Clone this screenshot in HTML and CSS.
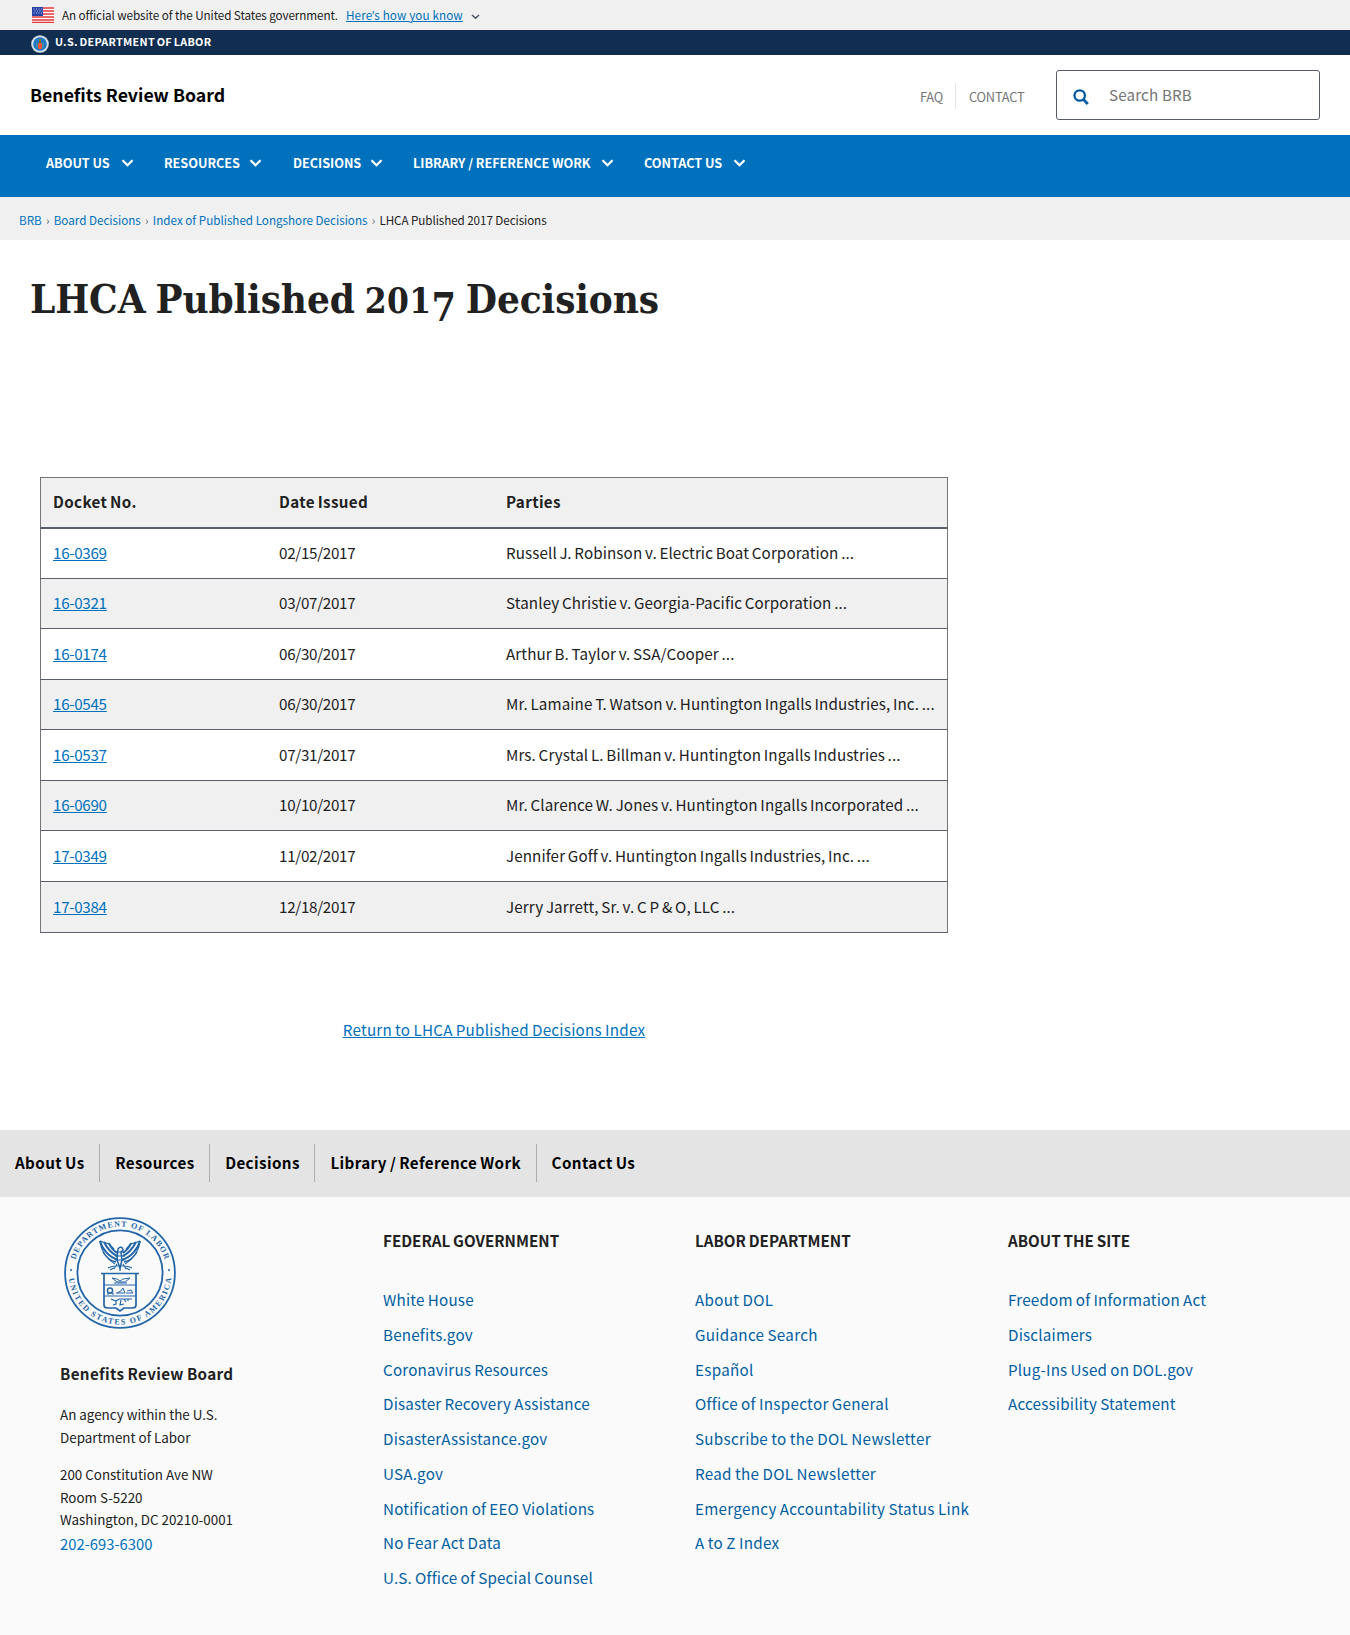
FILE: index.html
```html
<!DOCTYPE html>
<html lang="en">
<head>
<meta charset="utf-8">
<title>LHCA Published 2017 Decisions</title>
<link rel="stylesheet" href="styles.css">
</head>
<body>
<svg class="defs" width="0" height="0" aria-hidden="true">
  <symbol id="chev" viewBox="0 0 13 8"><path d="M1.5 1.2 6.5 6.2 11.5 1.2" fill="none" stroke="currentColor" stroke-width="2.3"/></symbol>
</svg>
<div class="gov">
  <svg class="flag" viewBox="0 0 22 16"><rect width="22" height="16" fill="#fff"/><path d="M0 1h22M0 4h22M0 7h22M0 10h22M0 13h22M0 15.5h22" stroke="#e0383b" stroke-width="1.5"/><rect width="11" height="9" fill="#2743a6"/><path d="M1.5 2h9M2.5 4h8M1.5 6h9" stroke="#b9c5ee" stroke-width="1" stroke-dasharray="1 1.5"/></svg>
  <span class="gov-text">An official website of the United States government.</span>
  <a class="gov-link">Here<span class="apos">’</span>s how you know</a>
  <svg class="gov-chev" viewBox="0 0 9 6"><path d="M1 1 4.5 4.3 8 1" fill="none" stroke="#4a5763" stroke-width="1.5"/></svg>
</div>
<div class="dol">
  <svg class="dol-seal" viewBox="0 0 18 18"><circle cx="9" cy="9" r="8.8" fill="#d5dde6"/><circle cx="9" cy="9" r="6.8" fill="#1c79c4"/><path d="M5 8h2v4H5zM11 8h2v4h-2z" fill="#3f8da0"/><path d="M8 4h2v4H8z" fill="#806a2c"/><path d="M7 8h4v6H7z" fill="#e8553c"/></svg>
  <span>U.S. DEPARTMENT OF LABOR</span>
</div>
<header class="head">
  <div class="site">Benefits Review Board</div>
  <div class="util"><a class="faq">FAQ</a><a class="contact">CONTACT</a></div>
  <div class="search">
    <svg class="mag" viewBox="0 0 16 16"><circle cx="6.7" cy="6.5" r="5.2" fill="none" stroke="#005a9e" stroke-width="2.3"/><path d="M10.5 10.5 14.8 15" stroke="#005a9e" stroke-width="2.8"/></svg>
    <span>Search BRB</span>
  </div>
</header>
<nav class="nav">
  <a class="n1">ABOUT US<svg><use href="#chev"/></svg></a>
  <a class="n2">RESOURCES<svg><use href="#chev"/></svg></a>
  <a class="n3">DECISIONS<svg><use href="#chev"/></svg></a>
  <a class="n4">LIBRARY / REFERENCE WORK<svg><use href="#chev"/></svg></a>
  <a class="n5">CONTACT US<svg><use href="#chev"/></svg></a>
</nav>
<div class="crumbs"><a>BRB</a><i>›</i><a>Board Decisions</a><i>›</i><a>Index of Published Longshore Decisions</a><i>›</i><span>LHCA Published 2017 Decisions</span></div>
<main>
  <h1>LHCA Published <span class="osf">201</span><span class="desc">7</span> Decisions</h1>
  <table>
    <colgroup><col class="c1"><col class="c2"><col></colgroup>
    <thead><tr><th>Docket No.</th><th>Date Issued</th><th>Parties</th></tr></thead>
    <tbody>
      <tr><td><a>16-0369</a></td><td>02/15/2017</td><td>Russell J. Robinson v. Electric Boat Corporation ...</td></tr>
      <tr><td><a>16-0321</a></td><td>03/07/2017</td><td>Stanley Christie v. Georgia-Pacific Corporation ...</td></tr>
      <tr><td><a>16-0174</a></td><td>06/30/2017</td><td>Arthur B. Taylor v. SSA/Cooper ...</td></tr>
      <tr><td><a>16-0545</a></td><td>06/30/2017</td><td>Mr. Lamaine T. Watson v. Huntington Ingalls Industries, Inc. ...</td></tr>
      <tr><td><a>16-0537</a></td><td>07/31/2017</td><td>Mrs. Crystal L. Billman v. Huntington Ingalls Industries ...</td></tr>
      <tr><td><a>16-0690</a></td><td>10/10/2017</td><td>Mr. Clarence W. Jones v. Huntington Ingalls Incorporated ...</td></tr>
      <tr><td><a>17-0349</a></td><td>11/02/2017</td><td>Jennifer Goff v. Huntington Ingalls Industries, Inc. ...</td></tr>
      <tr><td><a>17-0384</a></td><td>12/18/2017</td><td>Jerry Jarrett, Sr. v. C P &amp; O, LLC ...</td></tr>
    </tbody>
  </table>
  <p class="return"><a>Return to LHCA Published Decisions Index</a></p>
</main>
<nav class="fnav"><a>About Us</a><a>Resources</a><a>Decisions</a><a>Library / Reference Work</a><a>Contact Us</a></nav>
<footer>
  <div class="agency">
    <svg class="seal" viewBox="0 0 112 112">
      <defs><path id="arcTop" d="M9.5 56a46.5 46.5 0 0 1 93 0"/><path id="arcBot" d="M4.5 56a51.5 51.5 0 0 0 103 0"/></defs>
      <g fill="none" stroke="#2265a8">
        <circle cx="56" cy="56" r="54.9" stroke-width="1.8"/><circle cx="56" cy="56" r="42.6" stroke-width="1.8"/>
        <g stroke-width="2"><path d="M54 43C45 40 38 32 36 24M53 39C47 36 43 31 40 25M53 36C49 33 46 29 45 26M58 43C67 40 74 32 76 24M59 39C65 36 69 31 72 25M59 36C63 33 66 29 67 26"/>
        <path d="M52 45C47 44 42 40 39 35M60 45C65 44 70 40 73 35" stroke-width="1.4"/></g>
        <path d="M36 24C37 34 43 42 51 47M76 24C75 34 69 42 61 47M36 24l9 3 5 5M76 24l-9 3-5 5" stroke-width="1.2"/>
        <path d="M54 32c2-3 5-2 5 1l-2 2 1 8-2 8-3-8z" stroke-width="1.5"/>
        <path d="M52 35h8M51 39h10M51 43h10M53 47l-3 5M59 47l3 5M56 48v6M44 51c6-3 18-3 24 0M46 53l4-2M66 53l-4-2" stroke-width="1.2"/>
        <path d="M37 56.500h38M40 57v31q0 3 4 3h8l4 3 4-3h8q4 0 4-3V57" stroke-width="1.7"/>
        <path d="M40 68h32M40 79h32" stroke-width="1.100"/>
        <path d="M48 61l5 4h8l5-4-7 1-3 2-3-2zM50 66h13" stroke-width="1"/>
        <circle cx="46" cy="73.500" r="2.600" stroke-width="1.500"/><path d="M44 78v-2h5v2M53 76l4-2 2-3 2 5h-9M63 74l4-1 2 3h-7" stroke-width="1"/>
        <path d="M47 82l5 2 3-2 5 0 2 3M60 82h8M52 84v3l-3 1M57 83l-1 5 4-1M64 82v2" stroke-width="1.200"/>
      </g>
      <g class="seal-text"><text textLength="119"><textPath href="#arcTop" startOffset="13.500">DEPARTMENT OF LABOR</textPath></text><text textLength="151"><textPath href="#arcBot" startOffset="5.500">UNITED STATES OF AMERICA</textPath></text></g>
      <circle cx="7" cy="53" r="1" fill="#2265a8"/><circle cx="105" cy="53" r="1" fill="#2265a8"/>
    </svg>
    <h2>Benefits Review Board</h2>
    <p>An agency within the U.S.<br>Department of Labor</p>
    <p>200 Constitution Ave NW<br>Room S-5220<br>Washington, DC 20210-0001</p>
    <a class="tel">202-693-6300</a>
  </div>
  <div class="col"><h3>FEDERAL GOVERNMENT</h3><a>White House</a><a>Benefits.gov</a><a>Coronavirus Resources</a><a>Disaster Recovery Assistance</a><a>DisasterAssistance.gov</a><a>USA.gov</a><a>Notification of EEO Violations</a><a>No Fear Act Data</a><a>U.S. Office of Special Counsel</a></div>
  <div class="col labor"><h3>LABOR DEPARTMENT</h3><a>About DOL</a><a>Guidance Search</a><a>Español</a><a>Office of Inspector General</a><a>Subscribe to the DOL Newsletter</a><a>Read the DOL Newsletter</a><a>Emergency Accountability Status Link</a><a>A to Z Index</a></div>
  <div class="col"><h3>ABOUT THE SITE</h3><a>Freedom of Information Act</a><a>Disclaimers</a><a>Plug-Ins Used on DOL.gov</a><a>Accessibility Statement</a></div>
</footer>
</body>
</html>
```
FILE: styles.css
```css
* { box-sizing: border-box; }
body { margin: 0; background: #fff; color: #212121; font-family: "Noto Sans CJK SC", "Noto Sans", sans-serif; font-size: 15.2px; font-kerning: normal; height: 1635px; overflow: hidden; }
a { white-space: nowrap; color: #0071bc; }
.defs { position: absolute; }
.gov { height: 30px; background: #f0f0f0; display: flex; align-items: center; padding-left: 32px; font-size: 11.7px; letter-spacing: -.09px; line-height: 30px; white-space: nowrap; }
.flag { width: 22px; height: 16px; margin-right: 8px; }
.gov-text { width: 284px; }
.gov-link { width: 125px; text-decoration: underline; letter-spacing: .1px; }
.apos { font-family: "Open Sans", sans-serif; }
.gov-chev { width: 9px; height: 6px; margin-top: 3px; }
.dol { height: 25px; background: #112e51; color: #fff; display: flex; padding-left: 31px; font-size: 10.8px; font-weight: 700; line-height: 23px; letter-spacing: .3px; word-spacing: -1px; white-space: nowrap; }
.dol-seal { width: 18px; height: 18px; margin: 5px 6px 0 0; }
.head { height: 80px; display: flex; align-items: center; padding: 0 30px; }
.site { flex: 1; font-size: 17.7px; font-weight: 700; line-height: 79px; height: 80px; color: #000; white-space: nowrap; }
.util { display: flex; font-size: 12.8px; letter-spacing: -.2px; line-height: 24px; padding-top: 1px; }
.util a { color: #757575; }
.faq { width: 36px; border-right: 1px solid #e4e4e4; padding-top: 2px; }
.contact { width: 100px; padding-left: 13px; padding-top: 2px; }
.search { width: 264px; height: 50px; border: 1px solid #565c65; border-radius: 3px; display: flex; align-items: center; padding-left: 16px; line-height: 46px; letter-spacing: .15px; color: #757575; }
.search span { height: 48px; }
.mag { width: 16px; height: 16px; margin: 4px 20px 0 0; }
.nav { height: 62px; background: #0071bc; display: flex; padding-left: 46px; font-size: 12.7px; font-weight: 700; line-height: 55px; letter-spacing: -.05px; }
.nav a { color: #fff; display: flex; align-items: center; height: 55px; justify-content: space-between; }
.nav svg { width: 13px; height: 8px; margin-top: 1px; }
.n1 { width: 88px; margin-right: 30px; }
.n2 { width: 98px; margin-right: 31px; }
.n3 { width: 90px; margin-right: 30px; }
.n4 { width: 201px; margin-right: 30px; }
.n5 { width: 102px; }
.crumbs { height: 43px; background: #f0f0f0; padding-left: 19px; font-size: 11.65px; line-height: 46px; white-space: nowrap; color: #212121; display: flex; }
.crumbs i { font-style: normal; width: 12px; text-align: center; color: #5b616b; }
.crumbs > :last-child { letter-spacing: -.07px; }
main { height: 890px; padding: 29px 40px 0 30px; }
h1 { margin: 0; font: 700 40px/60px "DejaVu Serif Condensed", "DejaVu Serif", serif; font-stretch: condensed; letter-spacing: -.1px; word-spacing: -2.5px; white-space: nowrap; }
.osf { font-size: 35px; letter-spacing: .4px; }
.desc { position: relative; top: 8px; font-size: 39px; line-height: 1; }
table { width: 908px; margin: 146px 0 0 10px; table-layout: fixed; border-collapse: collapse; border: 1px solid #757575; line-height: 24px; }
.c1 { width: 226px; }
.c2 { width: 227px; }
th, td { text-align: left; padding: 0 0 3px 12.5px; height: 51px; border-bottom: 1px solid #5b616b; white-space: nowrap; }
tbody tr:nth-child(even) td { height: 50px; }
tbody tr:last-child td { height: 51px; }
td { letter-spacing: .1px; word-spacing: -.8px; }
td:first-child, td:nth-child(2) { letter-spacing: -.3px; }
th:first-child, td:first-child { padding-left: 12px; }
thead th { height: 50px; border-bottom: 2px solid #5b616b; letter-spacing: .35px; word-spacing: -1px; }
thead tr, tbody tr:nth-child(even) { background: #f0f0f0; }
td a, .return a { text-decoration: underline; }
.return { margin: 84px 0 0 10px; width: 908px; text-align: center; line-height: 24px; letter-spacing: .26px; word-spacing: -.6px; }
.fnav { height: 67px; background: #e4e4e4; display: flex; align-items: flex-start; padding-top: 14px; font-weight: 700; line-height: 36px; letter-spacing: .38px; word-spacing: -.8px; }
.fnav a { color: #000; height: 38px; padding: 0 14.600px 0 15px; border-right: 1px solid #adadad; }
.fnav a:last-child { border: 0; }
footer { height: 438px; background: #fafafa; display: grid; grid-template-columns: 323px 312px 313px 300px; padding-left: 60px; }
.agency { padding-top: 20px; font-size: 13.4px; }
.seal { display: block; width: 112px; height: 112px; margin-left: 4px; }
.seal-text { font: 700 8px "Liberation Serif", serif; fill: #2265a8; }
h2 { margin: 29px 0 15px; font-size: 15.2px; line-height: 30px; letter-spacing: .35px; word-spacing: -.7px; }
.agency p { margin: 0 0 15px; line-height: 22.600px; white-space: nowrap; }
.tel { display: block; margin-top: -14px; font-size: 14.8px; line-height: 24px; }
h3 { margin: 30px 0 29px; font-size: 15.2px; line-height: 26px; white-space: nowrap; word-spacing: -.5px; }
.col a { display: block; line-height: 34.750px; color: #005ea2; letter-spacing: .2px; word-spacing: -.5px; }
.labor a { letter-spacing: .3px; }
```
